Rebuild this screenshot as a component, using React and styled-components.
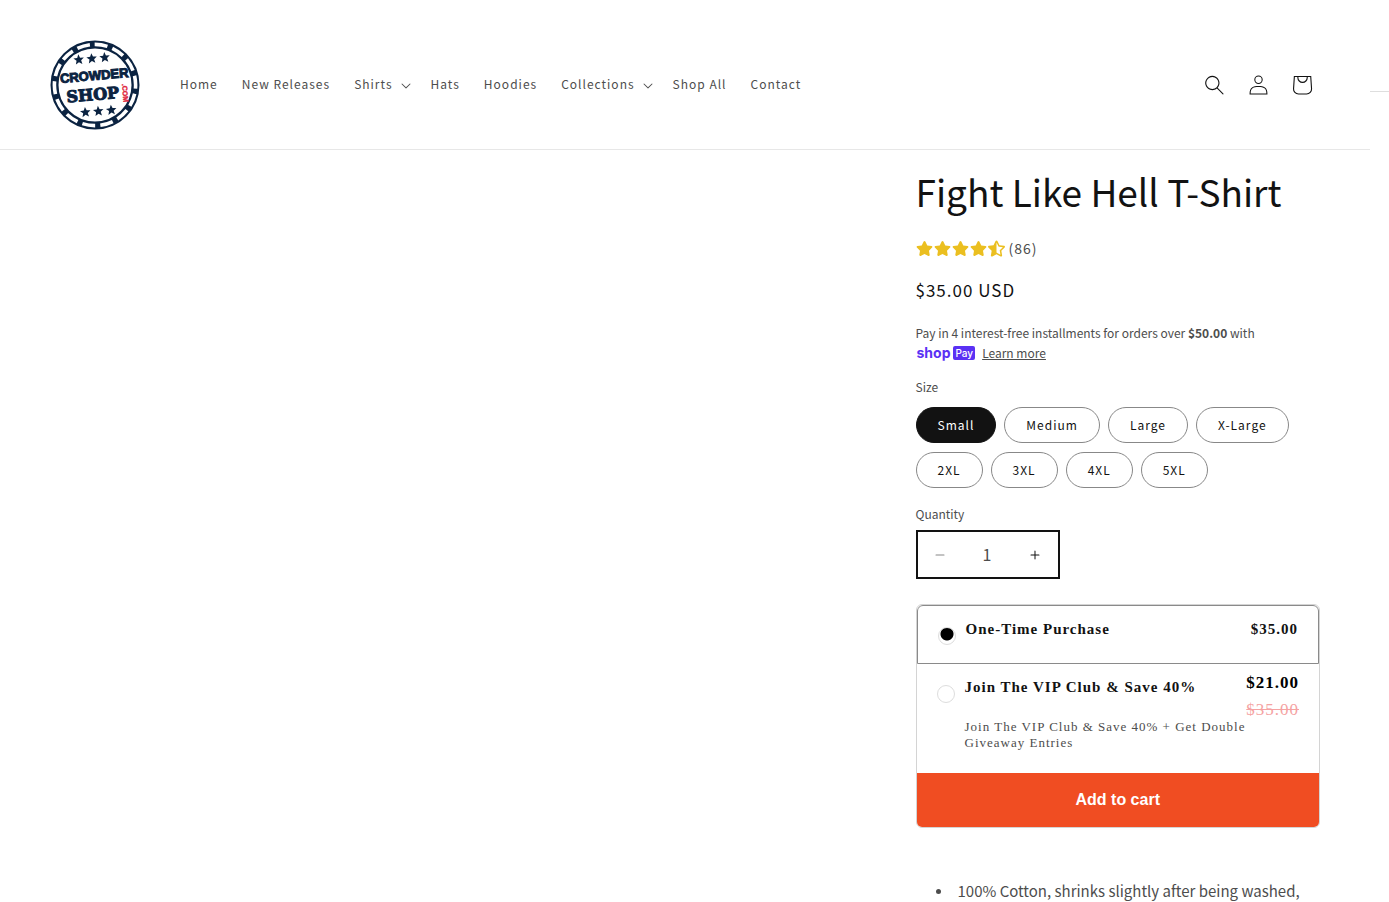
import { useState } from 'react';
import styled, { createGlobalStyle } from 'styled-components';
import { FaStar, FaStarHalfAlt } from 'react-icons/fa';

const NAV = [
  { label: 'Home' },
  { label: 'New Releases' },
  { label: 'Shirts', menu: true },
  { label: 'Hats' },
  { label: 'Hoodies' },
  { label: 'Collections', menu: true },
  { label: 'Shop All' },
  { label: 'Contact' },
];

const SIZES = ['Small', 'Medium', 'Large', 'X-Large', '2XL', '3XL', '4XL', '5XL'];

const LOGO_STARS = [
  [-14, -27],
  [-1, -27],
  [12, -27],
  [-12, 26],
  [1, 26],
  [14, 26],
];

function Logo() {
  return (
    <svg width="90" height="90" viewBox="-45 -45 90 90" aria-hidden="true">
      <circle r="40.5" fill="#fff" stroke="#0b2341" strokeWidth="8" />
      <circle
        r="40.6"
        fill="none"
        stroke="#fff"
        strokeWidth="3.6"
        strokeDasharray="13 5.22"
        transform="rotate(-90.5)"
      />
      <g transform="rotate(-5)">
        {LOGO_STARS.map(([x, y]) => (
          <path
            key={`${x},${y}`}
            d="M8 0.6l2.1 5.2 5.6 0.3-4.3 3.6 1.4 5.5L8 12.2l-4.8 3 1.4-5.5L0.3 6.1l5.6-0.3z"
            fill="#0b2341"
            transform={`translate(${x - 5.4} ${y - 5.4}) scale(0.68)`}
          />
        ))}
        <LogoText x="0" y="-5" textAnchor="middle">
          CROWDER
        </LogoText>
        <LogoText x="-3" y="15" textAnchor="middle" $slab>
          SHOP
        </LogoText>
      </g>
      <LogoText $red transform="translate(27 -1) rotate(85)">
        .COM
      </LogoText>
    </svg>
  );
}

function Caret() {
  return (
    <svg width="10" height="6" viewBox="0 0 10 6" aria-hidden="true">
      <path
        fillRule="evenodd"
        fill="currentColor"
        d="M9.354.646a.5.5 0 00-.708 0L5 4.293 1.354.646a.5.5 0 00-.708.708l4 4a.5.5 0 00.708 0l4-4a.5.5 0 000-.708z"
      />
    </svg>
  );
}

function Header() {
  return (
    <HeaderBar>
      <LogoLink href="#" aria-label="Crowder Shop">
        <Logo />
      </LogoLink>
      <Nav>
        {NAV.map((item) =>
          item.menu ? (
            <NavButton key={item.label} type="button">
              {item.label}
              <Caret />
            </NavButton>
          ) : (
            <NavLink key={item.label} href="#">
              {item.label}
            </NavLink>
          )
        )}
      </Nav>
      <HeaderIcons>
        <IconButton type="button" aria-label="Search">
          <svg width="19" height="20" viewBox="0 0 18 19">
            <path
              fillRule="evenodd"
              clipRule="evenodd"
              fill="currentColor"
              d="M11.03 11.68A5.784 5.784 0 112.85 3.5a5.784 5.784 0 018.18 8.18zm.26 1.12a6.78 6.78 0 11.72-.7l5.4 5.4a.5.5 0 11-.71.7l-5.41-5.4z"
            />
          </svg>
        </IconButton>
        <IconButton type="button" aria-label="Log in">
          <svg width="19" height="20" viewBox="0 0 18 19">
            <path
              fillRule="evenodd"
              clipRule="evenodd"
              fill="currentColor"
              d="M6 4.5a3 3 0 116 0 3 3 0 01-6 0zm3-4a4 4 0 100 8 4 4 0 000-8zm5.58 12.15c1.12.82 1.83 2.24 1.91 4.85H1.51c.08-2.6.79-4.03 1.9-4.85C4.66 11.75 6.5 11.5 9 11.5s4.35.26 5.58 1.15zM9 10.5c-2.5 0-4.65.24-6.17 1.35C1.27 12.98.5 14.93.5 18v.5h17V18c0-3.07-.77-5.02-2.33-6.15-1.52-1.1-3.67-1.35-6.17-1.35z"
            />
          </svg>
        </IconButton>
        <IconButton type="button" aria-label="Cart">
          <svg width="44" height="44" viewBox="0 0 40 40">
            <path
              fillRule="evenodd"
              fill="currentColor"
              d="M15.75 11.8h-3.16l-.77 11.6a5 5 0 004.99 5.34h7.38a5 5 0 004.99-5.33L28.4 11.8zm0 1h-2.22l-.71 10.67a4 4 0 003.99 4.27h7.38a4 4 0 004-4.27l-.72-10.67h-2.22v.56a4.75 4.75 0 11-9.5 0zm8.5 0h-7.5v.56a3.75 3.75 0 107.5 0z"
            />
          </svg>
        </IconButton>
      </HeaderIcons>
    </HeaderBar>
  );
}

function Rating() {
  return (
    <RatingRow>
      <Stars role="img" aria-label="4.5 out of 5">
        <FaStar />
        <FaStar />
        <FaStar />
        <FaStar />
        <FaStarHalfAlt />
      </Stars>
      <span>(86)</span>
    </RatingRow>
  );
}

function App() {
  const [size, setSize] = useState('Small');
  const [quantity, setQuantity] = useState(1);
  const [plan, setPlan] = useState('once');

  return (
    <Page>
      <GlobalStyle />
      <Content>
        <Header />
        <Product>
          <Info>
            <Title>Fight Like Hell T-Shirt</Title>
            <Rating />
            <Price>$35.00 USD</Price>
            <Installments>
              Pay in 4 interest-free installments for orders over{' '}
              <b>$50.00</b> with
              <PayLine>
                <ShopPay>
                  shop<PayBadge>Pay</PayBadge>
                </ShopPay>
                <a href="#">Learn more</a>
              </PayLine>
            </Installments>
            <Sizes>
              <Caption as="legend">Size</Caption>
              <Pills>
                {SIZES.map((name) => (
                  <Pill key={name} $active={size === name}>
                    <input
                      type="radio"
                      name="size"
                      value={name}
                      checked={size === name}
                      onChange={() => setSize(name)}
                    />
                    {name}
                  </Pill>
                ))}
              </Pills>
            </Sizes>
            <Caption as="label" htmlFor="quantity">
              Quantity
            </Caption>
            <Quantity>
              <QuantityButton
                type="button"
                aria-label="Decrease quantity"
                disabled={quantity === 1}
                onClick={() => setQuantity(quantity - 1)}
              >
                <svg width="10" height="2" viewBox="0 0 10 2">
                  <path
                    fill="currentColor"
                    d="M.5 1C.5.7.7.5 1 .5h8a.5.5 0 110 1H1A.5.5 0 01.5 1z"
                  />
                </svg>
              </QuantityButton>
              <input
                id="quantity"
                type="text"
                inputMode="numeric"
                value={quantity}
                onChange={(e) => setQuantity(Number(e.target.value) || 1)}
              />
              <QuantityButton
                type="button"
                aria-label="Increase quantity"
                onClick={() => setQuantity(quantity + 1)}
              >
                <svg width="10" height="10" viewBox="0 0 10 10">
                  <path
                    fill="currentColor"
                    d="M1 4.51a.5.5 0 000 1h3.5l.01 3.5a.5.5 0 001-.01V5.5l3.5-.01a.5.5 0 00-.01-1H5.5L5.49.99a.5.5 0 00-1 .01v3.5l-3.5.01H1z"
                  />
                </svg>
              </QuantityButton>
            </Quantity>
            <Purchase>
              <Option $selected={plan === 'once'}>
                <Radio
                  name="plan"
                  checked={plan === 'once'}
                  onChange={() => setPlan('once')}
                />
                <OptionText>
                  <strong>One-Time Purchase</strong>
                </OptionText>
                <OptionPrice>$35.00</OptionPrice>
              </Option>
              <Option $selected={plan === 'vip'}>
                <Radio
                  name="plan"
                  checked={plan === 'vip'}
                  onChange={() => setPlan('vip')}
                />
                <OptionText>
                  <strong>Join The VIP Club &amp; Save 40%</strong>
                  <small>
                    Join The VIP Club &amp; Save 40% + Get Double Giveaway
                    Entries
                  </small>
                </OptionText>
                <OptionPrice $large>
                  $21.00
                  <del>$35.00</del>
                </OptionPrice>
              </Option>
              <AddButton type="button">Add to cart</AddButton>
            </Purchase>
            <Details>
              <li>100% Cotton, shrinks slightly after being washed,</li>
            </Details>
          </Info>
        </Product>
      </Content>
      <Gutter />
    </Page>
  );
}

const GlobalStyle = createGlobalStyle`
  *, *::before, *::after {
    box-sizing: border-box;
  }
  body {
    margin: 0;
    background: #fff;
    color: #4d4d4d;
    font-family: 'Noto Sans CJK SC', 'Noto Sans', sans-serif;
    font-size: 14px;
    line-height: 20px;
    letter-spacing: 1px;
  }
  button, input {
    font: inherit;
    letter-spacing: inherit;
    color: inherit;
    margin: 0;
  }
  button {
    padding: 0;
    border: none;
    background: none;
    cursor: pointer;
  }
`;

const Page = styled.div`
  display: grid;
  grid-template-columns: 1fr 19px;
`;

const Content = styled.div`
  min-width: 0;
`;

const Gutter = styled.div`
  margin-top: 91px;
  border-top: 1px solid #dedede;
`;

const HeaderBar = styled.header`
  display: flex;
  align-items: center;
  padding: 40px 46px 19px 50px;
  border-bottom: 1px solid #e7e7e7;
`;

const LogoLink = styled.a`
  display: flex;
`;

const LogoText = styled.text`
  font-family: ${(p) =>
    p.$slab ? "'DejaVu Serif', serif" : "'Liberation Sans', sans-serif"};
  font-size: ${(p) => (p.$slab ? 16 : p.$red ? 7 : 13)}px;
  font-weight: 700;
  letter-spacing: 0;
  fill: ${(p) => (p.$red ? '#e0263c' : '#0b2341')};
  stroke: ${(p) => (p.$red ? '#e0263c' : '#0b2341')};
  stroke-width: ${(p) => (p.$red ? 0.4 : 1)};
`;

const Nav = styled.nav`
  display: flex;
  flex: 1;
  padding-left: 28px;
  font-size: 12px;
`;

const NavLink = styled.a`
  padding: 11px 12px 13px;
  color: inherit;
  text-decoration: none;
`;

const NavButton = styled.button`
  display: flex;
  align-items: center;
  gap: 8px;
  padding: 11px 8px 13px 12px;
  svg {
    margin-top: 3px;
  }
`;

const HeaderIcons = styled.div`
  display: flex;
  color: #121212;
`;

const IconButton = styled.button`
  display: flex;
  align-items: center;
  justify-content: center;
  width: 44px;
  height: 44px;
`;

const Product = styled.main`
  display: flex;
  justify-content: flex-end;
  padding: 18px 50px 0;
`;

const Info = styled.section`
  width: 35%;
  padding-left: 40px;
`;

const Title = styled.h1`
  margin: 0;
  color: #121212;
  font-size: 37px;
  font-weight: 400;
  line-height: 46px;
  letter-spacing: 0;
`;

const RatingRow = styled.div`
  display: flex;
  align-items: center;
  gap: 4px;
  margin-top: 24px;
`;

const Stars = styled.span`
  display: flex;
  gap: 1px;
  color: #ebbf20;
  font-size: 17px;
`;

const Price = styled.div`
  margin-top: 20px;
  color: #121212;
  font-size: 17px;
  line-height: 24px;
`;

const Installments = styled.div`
  margin-top: 21px;
  font-size: 12px;
  letter-spacing: 0;
  a {
    color: inherit;
  }
`;

const PayLine = styled.div`
  display: flex;
  align-items: center;
  gap: 7px;
  padding-left: 1px;
`;

const ShopPay = styled.span`
  display: flex;
  align-items: center;
  gap: 3px;
  color: #5a31f4;
  font-family: Inter, sans-serif;
  font-size: 14px;
  font-weight: 700;
  line-height: 14px;
`;

const PayBadge = styled.span`
  padding: 0 2px;
  border-radius: 2px;
  background: #5a31f4;
  color: #fff;
  font-size: 10px;
  font-weight: 500;
`;

const Caption = styled.span`
  display: block;
  padding: 0;
  font-size: 12px;
  letter-spacing: 0;
`;

const Sizes = styled.fieldset`
  margin: 14px 0 16px;
  padding: 0;
  border: none;
`;

const Pills = styled.div`
  display: flex;
  flex-wrap: wrap;
  gap: 9px 8px;
  padding-top: 10px;
`;

const Pill = styled.label`
  padding: 7px 21px;
  border: 1px solid ${(p) => (p.$active ? '#121212' : '#888')};
  border-radius: 18px;
  background: ${(p) => (p.$active ? '#121212' : '#fff')};
  color: ${(p) => (p.$active ? '#fff' : '#121212')};
  font-size: 12px;
  cursor: pointer;
  input {
    position: absolute;
    opacity: 0;
    pointer-events: none;
  }
`;

const Quantity = styled.div`
  display: flex;
  width: 144px;
  height: 49px;
  margin-top: 6px;
  border: 2px solid #121212;
  input {
    flex: 1;
    min-width: 0;
    padding: 0 0 2px;
    border: none;
    background: none;
    font-size: 16px;
    text-align: center;
  }
`;

const QuantityButton = styled.button`
  display: flex;
  align-items: center;
  justify-content: center;
  width: 45px;
  color: #121212;
  &:disabled {
    opacity: 0.5;
  }
`;

const Purchase = styled.div`
  margin-top: 25px;
  border: 1px solid #d4d4d4;
  border-radius: 6px;
  overflow: hidden;
  font-family: 'Liberation Serif', serif;
`;

const Option = styled.label`
  display: flex;
  align-items: flex-start;
  padding: ${(p) => (p.$selected ? '13px 20px 18px' : '13px 20px 22px')};
  border: ${(p) => (p.$selected ? '1px solid #8a8a8a' : 'none')};
  border-radius: 6px 6px 0 0;
  cursor: pointer;
`;

const Radio = styled.input.attrs({ type: 'radio' })`
  appearance: none;
  flex: none;
  width: 18px;
  height: 18px;
  margin: 8px 10px 0 0;
  border: 1px solid #ddd;
  border-radius: 50%;
  &:checked {
    background: radial-gradient(circle at 50% 6px, #000 6px, transparent 7px);
  }
`;

const OptionText = styled.span`
  flex: 1;
  min-width: 0;
  strong {
    display: block;
    color: #121212;
    font-size: 15px;
  }
  small {
    display: block;
    margin: 22px -60px 0 0;
    padding-right: 20px;
    font-size: 13px;
    line-height: 16px;
  }
`;

const OptionPrice = styled.span`
  color: ${(p) => (p.$large ? '#000' : '#121212')};
  font-size: ${(p) => (p.$large ? 17 : 15)}px;
  font-weight: 700;
  margin-top: ${(p) => (p.$large ? -8 : 0)}px;
  line-height: ${(p) => (p.$large ? 27 : 20)}px;
  del {
    display: block;
    color: #f5a3a3;
    font-weight: 400;
  }
`;

const AddButton = styled.button`
  display: block;
  width: 100%;
  height: 54px;
  background: #f04d22;
  color: #fff;
  font-family: 'Liberation Sans', sans-serif;
  font-size: 16px;
  font-weight: 700;
  letter-spacing: 0;
`;

const Details = styled.ul`
  margin: 53px 0 0;
  padding-left: 20px;
  font-size: 15px;
  letter-spacing: 0;
  list-style: none;
  li {
    display: flex;
    align-items: center;
    gap: 17px;
  }
  li::before {
    content: '';
    flex: none;
    width: 5px;
    height: 5px;
    border-radius: 50%;
    background: currentColor;
  }
`;

export default App;
